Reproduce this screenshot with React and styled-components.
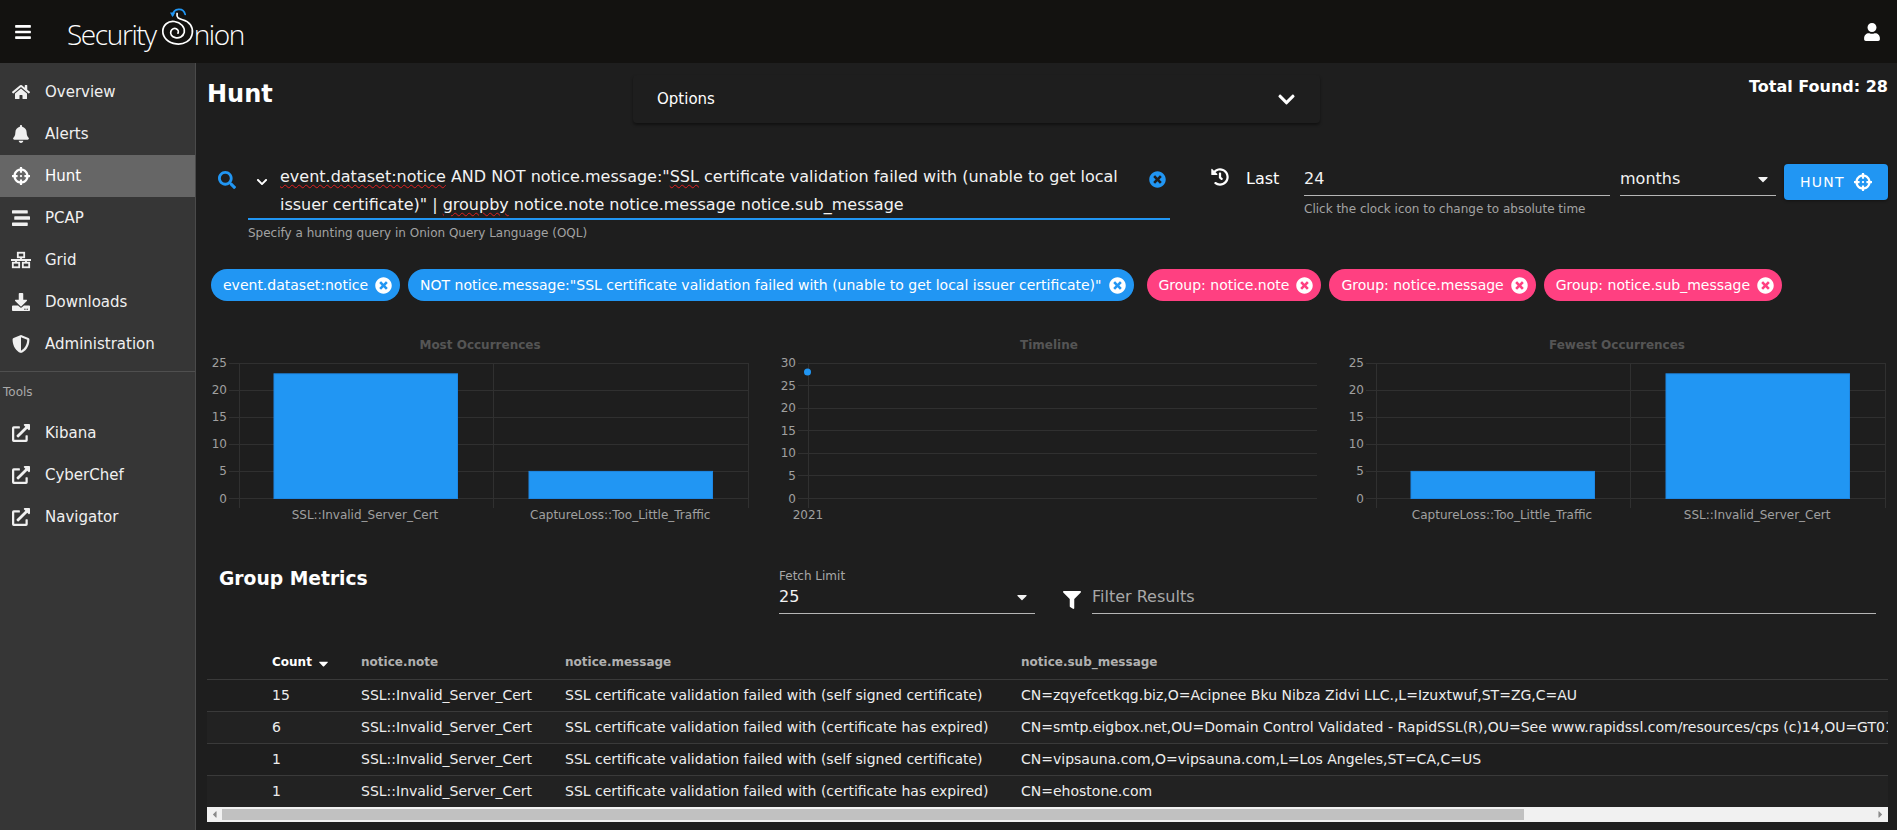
import React from "react";
import styled, { createGlobalStyle } from "styled-components";
import {
  FaBars,
  FaBell,
  FaCaretDown,
  FaCaretLeft,
  FaCaretRight,
  FaChevronDown,
  FaCrosshairs,
  FaDownload,
  FaExternalLinkAlt,
  FaFilter,
  FaHistory,
  FaHome,
  FaSearch,
  FaShieldAlt,
  FaStream,
  FaTimesCircle,
  FaUser
} from "react-icons/fa";

const BLUE = "#2196f3";
const PINK = "#ff4081";

const GlobalStyle = createGlobalStyle`
  html, body {
    margin: 0;
    height: 100%;
    overflow: hidden;
    background: #1e1e1e;
    color: #fff;
    font-family: "DejaVu Sans", sans-serif;
  }
  * { box-sizing: border-box; }
`;

const Page = styled.div`
  display: grid;
  grid-template-rows: 63px 1fr;
  height: 830px;
  width: 1897px;
`;

const TopBar = styled.header`
  display: flex;
  align-items: center;
  padding: 0 16px 0 14px;
  background: #131210;
`;

const MenuButton = styled(FaBars)`
  font-size: 18px;
  margin-right: 35px;
`;

const Logo = styled.div`
  display: flex;
  align-items: center;
  font-family: "Open Sans", sans-serif;
  font-weight: 300;
  font-size: 28px;
  letter-spacing: -1.4px;
  position: relative;
  top: 2px;
`;

const LogoMark = styled.svg`
  margin: -16px -1px 0 5px;
  display: block;
`;

const UserIcon = styled(FaUser)`
  font-size: 18px;
  margin-left: auto;
`;

const Body = styled.div`
  display: grid;
  grid-template-columns: 196px 1fr;
  min-height: 0;
`;

const Side = styled.nav`
  background: #363636;
  border-right: 1px solid #4a4a4a;
  padding-top: 8px;
`;

const NavItem = styled.div`
  display: flex;
  align-items: center;
  height: 42px;
  padding-left: 11px;
  font-size: 15px;
  color: ${p => (p.$active ? "#fff" : "#f0f0f0")};
  background: ${p => (p.$active ? "#666" : "transparent")};
`;

const NavIcon = styled.span`
  display: flex;
  justify-content: center;
  width: 20px;
  margin-right: 14px;
  font-size: 18px;
`;

const Divider = styled.div`
  height: 1px;
  background: #4f4f4f;
  margin-top: 6px;
`;

const ToolsHead = styled.div`
  height: 40px;
  padding: 13px 0 0 3px;
  font-size: 12px;
  line-height: 14px;
  color: #aaa;
`;

const Main = styled.main`
  min-width: 0;
`;

const HeadRow = styled.div`
  display: grid;
  grid-template-columns: 426px 687px 1fr;
  padding: 12px 9px 0 11px;
`;

const Title = styled.h1`
  margin: 5px 0 0;
  font-size: 24px;
  line-height: 28px;
  font-weight: 700;
`;

const Options = styled.div`
  display: flex;
  align-items: center;
  justify-content: space-between;
  height: 48px;
  padding: 0 24px;
  font-size: 15px;
  background: #1e1e1e;
  border-radius: 4px;
  box-shadow: 0 2px 3px rgba(0, 0, 0, 0.45);
  svg { font-size: 19px; }
`;

const Total = styled.div`
  margin-top: 1px;
  text-align: right;
  font-size: 16px;
  line-height: 22px;
  font-weight: 700;
`;

const SearchRow = styled.div`
  display: flex;
  align-items: flex-start;
  padding: 39px 9px 0 22px;
`;

const SearchIcon = styled(FaSearch)`
  font-size: 18px;
  color: ${BLUE};
  margin: 9px 12px 0 0;
`;

const QueryCol = styled.div`
  width: 922px;
`;

const QueryBox = styled.div`
  display: flex;
  align-items: flex-start;
  border-bottom: 2px solid ${BLUE};
  height: 58px;
`;

const QueryChevron = styled(FaChevronDown)`
  font-size: 12px;
  margin: 14px 12px 0 8px;
  flex: none;
`;

const QueryText = styled.div`
  width: 850px;
  padding-top: 1px;
  font-size: 16px;
  line-height: 28px;
  color: #f2f2f2;
`;

const QueryLine = styled.div`
  white-space: nowrap;
`;

const Misspelled = styled.span`
  text-decoration: underline wavy #e02020 1px;
  text-underline-offset: 2px;
`;

const ClearIcon = styled(FaTimesCircle)`
  font-size: 17px;
  color: ${BLUE};
  margin: 9px 0 0 19px;
  flex: none;
`;

const Hint = styled.div`
  font-size: 12px;
  line-height: 14px;
  margin-top: ${p => p.$top || 6}px;
  color: #a3a3a3;
`;

const HistoryIcon = styled(FaHistory)`
  font-size: 18px;
  margin: 6px 17px 0 41px;
  flex: none;
`;

const LastLabel = styled.div`
  font-size: 16px;
  line-height: 28px;
  margin: 3px 24px 0 0;
  width: 34px;
`;

const Field = styled.div`
  width: ${p => p.$width}px;
  margin: ${p => p.$top || 3}px ${p => p.$right || 0}px 0 0;
`;

const FieldValue = styled.div`
  display: flex;
  align-items: center;
  justify-content: space-between;
  height: 31px;
  padding-bottom: 3px;
  font-size: 16px;
  color: ${p => (p.$muted ? "#a8a8a8" : "#f2f2f2")};
  border-bottom: 1px solid #b5b5b5;
`;

const SelectCaret = styled(FaCaretDown)`
  font-size: 16px;
  margin-right: 5px;
`;

const HuntButton = styled.button`
  display: flex;
  align-items: center;
  justify-content: center;
  gap: 9px;
  width: 104px;
  height: 36px;
  margin-top: 2px;
  border: 0;
  border-radius: 4px;
  background: ${BLUE};
  color: #fff;
  font-family: inherit;
  font-size: 14px;
  letter-spacing: 1.25px;
  box-shadow: 0 1px 3px rgba(0, 0, 0, 0.4);
  svg { font-size: 18px; }
`;

const ChipRow = styled.div`
  display: flex;
  gap: 8px;
  padding: 29px 0 0 15px;
`;

const Chip = styled.div`
  display: flex;
  align-items: center;
  gap: 7px;
  height: 32px;
  padding: 0 8px 0 12px;
  border-radius: 16px;
  font-size: 14px;
  white-space: nowrap;
  background: ${p => p.$bg};
  color: #fff;
  margin-right: ${p => p.$after || 0}px;
  svg { font-size: 17px; }
`;

const ChartRow = styled.div`
  display: grid;
  grid-template-columns: repeat(3, 545px);
  gap: 23.5px;
  padding: 34px 0 0 11px;
`;

const ChartSvg = styled.svg`
  display: block;
  font-family: "DejaVu Sans", sans-serif;
`;

const ChartTitle = styled.text`
  font-size: 12px;
  font-weight: 700;
  fill: #555;
  text-anchor: middle;
`;

const AxisLabel = styled.text`
  font-size: 12px;
  fill: #a0a0a0;
  text-anchor: ${p => p.$anchor || "middle"};
`;

const MetricsRow = styled.div`
  display: flex;
  align-items: flex-start;
  padding: 37px 12px 0 23px;
`;

const MetricsTitle = styled.h2`
  width: 560px;
  margin: 0;
  font-size: 18.72px;
  line-height: 24px;
  font-weight: 700;
`;

const FieldLabel = styled.div`
  font-size: 12px;
  line-height: 14px;
  color: #a8a8a8;
`;

const FilterIcon = styled(FaFilter)`
  font-size: 18px;
  margin: 24px 11px 0 28px;
  flex: none;
`;

const TableScroll = styled.div`
  width: 1681px;
  margin-top: 32px;
  margin-left: 11px;
  overflow: hidden;
`;

const Table = styled.table`
  width: 2133px;
  table-layout: fixed;
  border-collapse: collapse;
`;

const HeadCell = styled.th`
  height: 33px;
  width: ${p => p.$width}px;
  padding: 0 16px;
  text-align: left;
  font-size: 12px;
  font-weight: 700;
  white-space: nowrap;
  color: ${p => (p.$sorted ? "#fff" : "#b0b0b0")};
  border-bottom: 1px solid #3a3a3a;
  padding-left: ${p => (p.$sorted ? 65 : 16)}px;
  svg { margin: 0 0 -5px 4px; font-size: 15px; }
`;

const Row = styled.tr`
  background: ${p => (p.$striped ? "#222" : "transparent")};
`;

const Cell = styled.td`
  height: 32px;
  padding: 0 16px;
  font-size: 14px;
  white-space: nowrap;
  color: #ededed;
  border-bottom: 1px solid #3a3a3a;
  padding-left: ${p => (p.$first ? 65 : 16)}px;
  tr:last-child & { border-bottom: 0; }
`;

const ScrollTrack = styled.div`
  display: flex;
  align-items: center;
  height: 15px;
  background: #f1f1f1;
`;

const ScrollArrow = styled.span`
  display: flex;
  align-items: center;
  justify-content: center;
  flex: none;
  width: 15px;
  height: 15px;
  font-size: 11px;
  color: #8a8a8a;
  margin-left: ${p => (p.$end ? "auto" : 0)};
`;

const ScrollThumb = styled.div`
  width: 1302px;
  height: 11px;
  background: #c1c1c1;
`;

const GridIcon = () => (
  <svg width="22" height="18" viewBox="0 0 22 18" fill="none" stroke="currentColor" strokeWidth="2">
    <rect x="7.5" y="1" width="7" height="5" />
    <rect x="2" y="12" width="7" height="5" />
    <rect x="13" y="12" width="7" height="5" />
    <path d="M0 9h22M11 6v3M5.5 9v3M16.5 9v3" />
  </svg>
);

const navItems = [
  { label: "Overview", icon: FaHome },
  { label: "Alerts", icon: FaBell },
  { label: "Hunt", icon: FaCrosshairs, active: true },
  { label: "PCAP", icon: FaStream },
  { label: "Grid", icon: GridIcon },
  { label: "Downloads", icon: FaDownload },
  { label: "Administration", icon: FaShieldAlt }
];

const toolItems = ["Kibana", "CyberChef", "Navigator"];

const chips = [
  { label: "event.dataset:notice", bg: BLUE },
  {
    label:
      'NOT notice.message:"SSL certificate validation failed with (unable to get local issuer certificate)"',
    bg: BLUE,
    after: 5
  },
  { label: "Group: notice.note", bg: PINK },
  { label: "Group: notice.message", bg: PINK },
  { label: "Group: notice.sub_message", bg: PINK }
];

const rows = [
  {
    count: 15,
    message: "SSL certificate validation failed with (self signed certificate)",
    sub: "CN=zqyefcetkqg.biz,O=Acipnee Bku Nibza Zidvi LLC.,L=Izuxtwuf,ST=ZG,C=AU"
  },
  {
    count: 6,
    message: "SSL certificate validation failed with (certificate has expired)",
    sub:
      "CN=smtp.eigbox.net,OU=Domain Control Validated - RapidSSL(R),OU=See www.rapidssl.com/resources/cps (c)14,OU=GT01"
  },
  {
    count: 1,
    message: "SSL certificate validation failed with (self signed certificate)",
    sub: "CN=vipsauna.com,O=vipsauna.com,L=Los Angeles,ST=CA,C=US"
  },
  {
    count: 1,
    message: "SSL certificate validation failed with (certificate has expired)",
    sub: "CN=ehostone.com"
  }
];

const PLOT_TOP = 28;
const PLOT_BOTTOM = 163.5;
const PLOT_LEFT = 32;
const PLOT_RIGHT = 541;

const Chart = ({ title, max, bars, point, labels }) => {
  const scale = (PLOT_BOTTOM - PLOT_TOP) / max;
  const ticks = [];
  for (let v = max; v >= 0; v -= 5) ticks.push(v);
  const dividers = bars
    ? [PLOT_LEFT, (PLOT_LEFT + PLOT_RIGHT) / 2, PLOT_RIGHT]
    : [PLOT_LEFT];

  return (
    <ChartSvg width="545" height="195" viewBox="0 0 545 195">
      <ChartTitle x="273" y="14">
        {title}
      </ChartTitle>
      {ticks.map(v => {
        const y = PLOT_BOTTOM - v * scale;
        return (
          <g key={v}>
            <line x1="22" x2={PLOT_RIGHT} y1={y} y2={y} stroke="#303030" shapeRendering="crispEdges" />
            <AxisLabel $anchor="end" x="20" y={y + 4}>
              {v}
            </AxisLabel>
          </g>
        );
      })}
      {dividers.map(x => (
        <line key={x} x1={x} x2={x} y1={PLOT_TOP} y2="173" stroke="#303030" shapeRendering="crispEdges" />
      ))}
      {bars &&
        bars.map((b, i) => (
          <rect
            key={i}
            x={67 + i * 255}
            y={PLOT_BOTTOM - b * scale}
            width="183.5"
            height={b * scale}
            fill={BLUE}
            stroke="#1e88e5"
          />
        ))}
      {point && (
        <circle
          cx={PLOT_LEFT - 0.5}
          cy={PLOT_BOTTOM - point * scale}
          r="3.5"
          fill={BLUE}
        />
      )}
      {bars ? (
        labels.map((l, i) => (
          <AxisLabel key={l} x={158 + i * 255.2} y="184">
            {l}
          </AxisLabel>
        ))
      ) : (
        <AxisLabel x={PLOT_LEFT} y="184">
          {labels[0]}
        </AxisLabel>
      )}
    </ChartSvg>
  );
};

const App = () => (
  <Page>
    <GlobalStyle />
    <TopBar>
      <MenuButton />
      <Logo>
        <span>Security</span>
        <LogoMark width="34" height="46" viewBox="0 0 38 50" fill="none">
          <path
            d="M13 13 C14 5 25 4 27 12"
            stroke={BLUE}
            strokeWidth="2"
            strokeLinecap="round"
          />
          <path d="M10 10 L16 10 L13 15 Z" fill={BLUE} />
          <path
            d="M18 11 C17 16 20 17 24 18 C32 20 36 26 35 33 C34 42 25 46 17 45 C8 44 2 38 2 31 C2 24 8 19 15 20 C22 21 27 26 26 32 C25 37 20 39 16 38 C12 37 10 34 11 31 C12 28 15 27 17 28 C19 29 20 31 19 33"
            stroke="#fff"
            strokeWidth="1.9"
            strokeLinecap="round"
          />
        </LogoMark>
        <span>nion</span>
      </Logo>
      <UserIcon />
    </TopBar>
    <Body>
      <Side>
        {navItems.map(({ label, icon: Icon, active }) => (
          <NavItem key={label} $active={active}>
            <NavIcon>
              <Icon />
            </NavIcon>
            {label}
          </NavItem>
        ))}
        <Divider />
        <ToolsHead>Tools</ToolsHead>
        {toolItems.map(label => (
          <NavItem key={label}>
            <NavIcon>
              <FaExternalLinkAlt />
            </NavIcon>
            {label}
          </NavItem>
        ))}
      </Side>
      <Main>
        <HeadRow>
          <Title>Hunt</Title>
          <Options>
            Options
            <FaChevronDown />
          </Options>
          <Total>Total Found: 28</Total>
        </HeadRow>
        <SearchRow>
          <SearchIcon />
          <QueryCol>
            <QueryBox>
              <QueryChevron />
              <QueryText>
                <QueryLine>
                  <Misspelled>event.dataset:notice</Misspelled> AND NOT
                  notice.message:"<Misspelled>SSL</Misspelled> certificate
                  validation failed with (unable to get local
                </QueryLine>
                <QueryLine>
                  issuer certificate)" | <Misspelled>groupby</Misspelled>{" "}
                  notice.note notice.message notice.sub_message
                </QueryLine>
              </QueryText>
              <ClearIcon />
            </QueryBox>
            <Hint>Specify a hunting query in Onion Query Language (OQL)</Hint>
          </QueryCol>
          <HistoryIcon />
          <LastLabel>Last</LastLabel>
          <Field $width={306} $right={10}>
            <FieldValue>24</FieldValue>
            <Hint>Click the clock icon to change to absolute time</Hint>
          </Field>
          <Field $width={156} $right={8}>
            <FieldValue>
              months
              <SelectCaret />
            </FieldValue>
          </Field>
          <HuntButton>
            HUNT
            <FaCrosshairs />
          </HuntButton>
        </SearchRow>
        <ChipRow>
          {chips.map(c => (
            <Chip key={c.label} $bg={c.bg} $after={c.after}>
              {c.label}
              <FaTimesCircle />
            </Chip>
          ))}
        </ChipRow>
        <ChartRow>
          <Chart
            title="Most Occurrences"
            max={25}
            bars={[23, 5]}
            labels={["SSL::Invalid_Server_Cert", "CaptureLoss::Too_Little_Traffic"]}
          />
          <Chart title="Timeline" max={30} point={28} labels={["2021"]} />
          <Chart
            title="Fewest Occurrences"
            max={25}
            bars={[5, 23]}
            labels={["CaptureLoss::Too_Little_Traffic", "SSL::Invalid_Server_Cert"]}
          />
        </ChartRow>
        <MetricsRow>
          <MetricsTitle>Group Metrics</MetricsTitle>
          <Field $width={256} $top={2}>
            <FieldLabel>Fetch Limit</FieldLabel>
            <FieldValue>
              25
              <SelectCaret />
            </FieldValue>
          </Field>
          <FilterIcon />
          <Field $width={784} $top={16}>
            <FieldValue $muted>Filter Results</FieldValue>
          </Field>
        </MetricsRow>
        <TableScroll>
          <Table>
            <thead>
              <tr>
                <HeadCell $width={138} $sorted>
                  Count
                  <FaCaretDown />
                </HeadCell>
                <HeadCell $width={204}>notice.note</HeadCell>
                <HeadCell $width={456}>notice.message</HeadCell>
                <HeadCell $width={1335}>notice.sub_message</HeadCell>
              </tr>
            </thead>
            <tbody>
              {rows.map((r, i) => (
                <Row key={i} $striped={i % 2 === 1}>
                  <Cell $first>{r.count}</Cell>
                  <Cell>SSL::Invalid_Server_Cert</Cell>
                  <Cell>{r.message}</Cell>
                  <Cell>{r.sub}</Cell>
                </Row>
              ))}
            </tbody>
          </Table>
          <ScrollTrack>
            <ScrollArrow>
              <FaCaretLeft />
            </ScrollArrow>
            <ScrollThumb />
            <ScrollArrow $end>
              <FaCaretRight />
            </ScrollArrow>
          </ScrollTrack>
        </TableScroll>
      </Main>
    </Body>
  </Page>
);

export default App;
